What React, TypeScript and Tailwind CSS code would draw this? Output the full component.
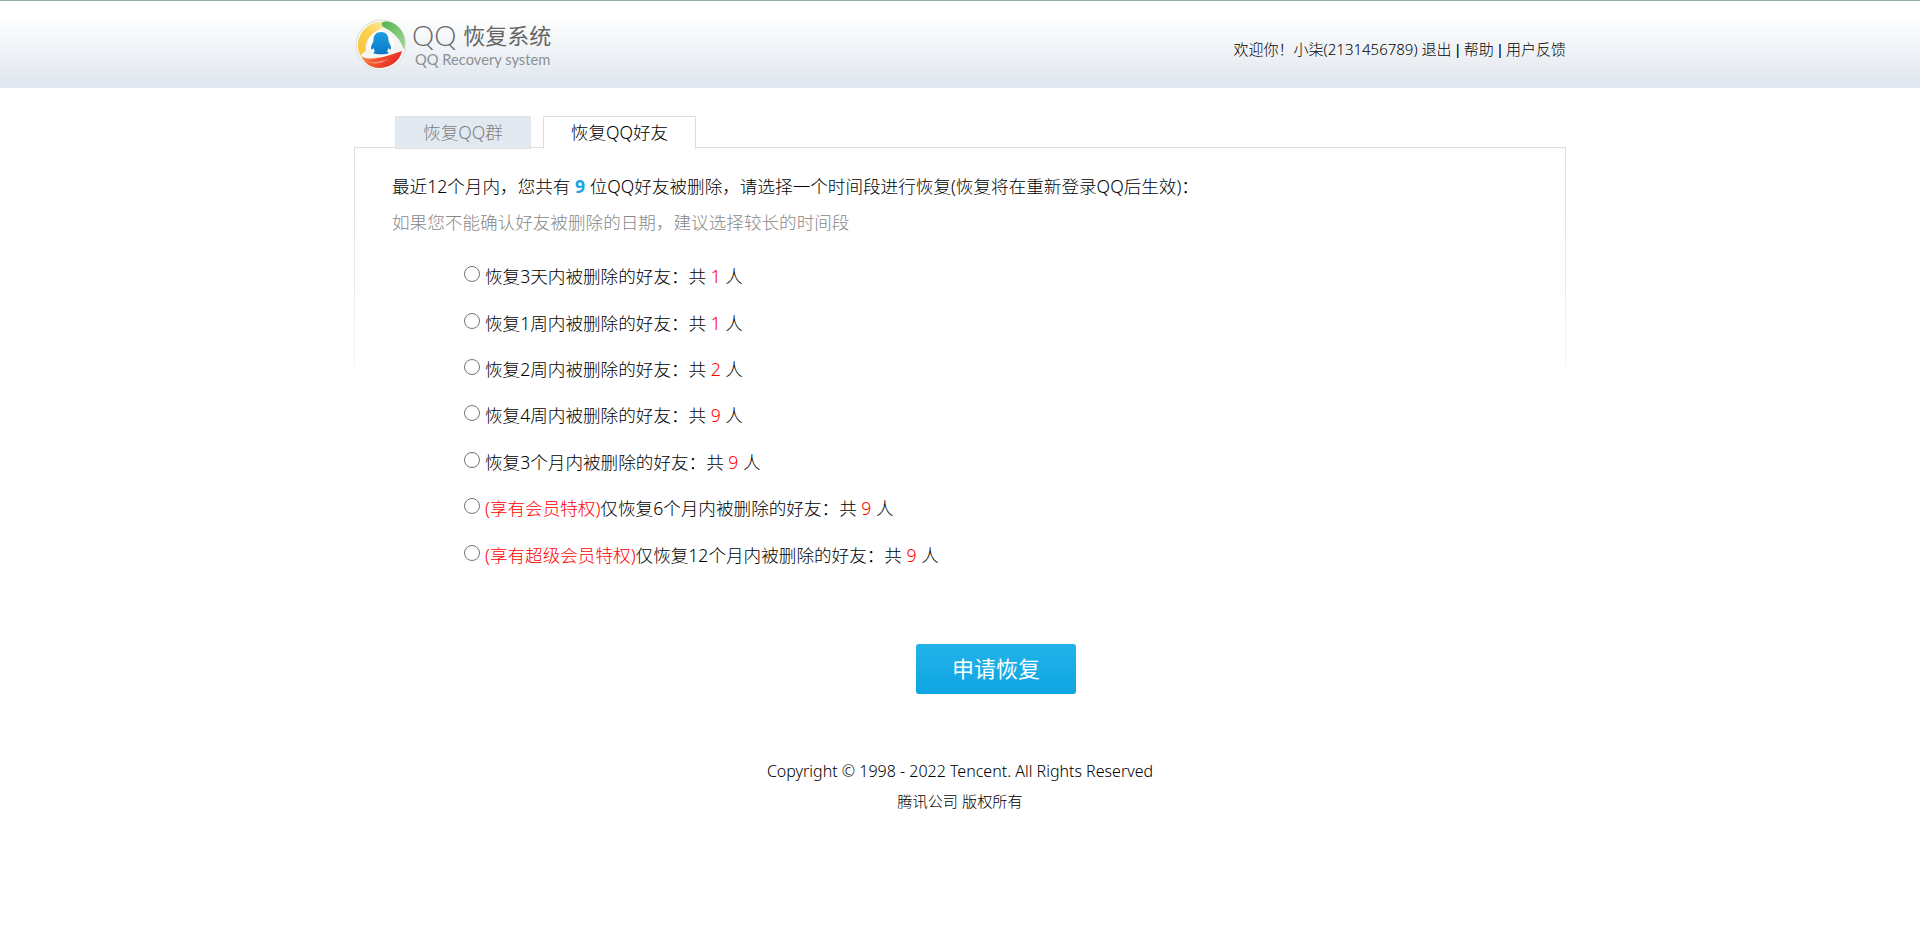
import React from "react";

const font = { fontFamily: '"Noto Sans", "Noto Sans CJK SC", sans-serif' };

function Logo() {
  return (
    <svg width="52" height="52" viewBox="0 0 52 52" className="shrink-0">
      <defs>
        <linearGradient id="blue" x1="0" y1="0" x2="0" y2="1">
          <stop offset="0" stopColor="#1d9fdf" />
          <stop offset="1" stopColor="#0b78c8" />
        </linearGradient>
        <linearGradient id="red" x1="0" y1="0" x2="1" y2="0.3">
          <stop offset="0" stopColor="#f6b06a" />
          <stop offset="0.45" stopColor="#f2572e" />
          <stop offset="1" stopColor="#e92a2a" />
        </linearGradient>
        <linearGradient id="yellow" x1="0.8" y1="0" x2="0.2" y2="1">
          <stop offset="0" stopColor="#fbe79a" />
          <stop offset="0.4" stopColor="#fcd04e" />
          <stop offset="1" stopColor="#f8c53e" />
        </linearGradient>
        <linearGradient id="green" x1="0" y1="0" x2="1" y2="1">
          <stop offset="0" stopColor="#52b44e" />
          <stop offset="1" stopColor="#a2d79a" />
        </linearGradient>
      </defs>
      <circle cx="26" cy="26" r="25" fill="#f4f6f4" stroke="#dbe3dc" strokeWidth="1" />
      <path d="M30 3C16 1 3 12 3 27c0 4 1 7 3 10 1-3 3-4 5-5-2-10 5-19 19-24.500-1-1.500-1-3 0-4.500z" fill="url(#yellow)" />
      <path d="M27 4c3-3 13-1.500 19 7 4 6 5 13 3 20-3-9-8-16-17-21-3-1.500-6-3-5-6z" fill="url(#green)" />
      <path d="M6 37c5 3 10 3 16 2 8-1 16-4 25-7-2 10-12 17-23 17C16 49 9 44 6 37z" fill="url(#red)" />
      <path d="M13 43c7 1 14-1 20-3-4 4-14 6-20 3z" fill="#ffffff" opacity="0.4" />
      <path d="M13 24c0-6 6-12 13-12s12 5 13 12c0 5-5 10-13 11-8 0-13-5-13-11z" fill="#ffffff" />
      <path d="M26 13c-5 0-7.500 3.500-7.500 8 0 1.500-.8 3-1.700 4.500-1 2-1 4.500-.3 5 .6.300 1.500-.5 2-1.500.4 1.500 1 2.500 1.700 3.300-1 .4-1.700 1-1.700 1.700 0 1 3.500 1.200 7.500 1.200s7.500-.2 7.500-1.200c0-.7-.7-1.300-1.700-1.700.7-.8 1.300-1.800 1.700-3.300.5 1 1.400 1.800 2 1.500.7-.5.7-3-.3-5-.9-1.500-1.700-3-1.700-4.500 0-4.500-2.500-8-7.500-8z" fill="url(#blue)" />
    </svg>
  );
}

const rows: { pre?: string; label: string; n: number }[] = [
  { label: "恢复3天内被删除的好友：共 ", n: 1 },
  { label: "恢复1周内被删除的好友：共 ", n: 1 },
  { label: "恢复2周内被删除的好友：共 ", n: 2 },
  { label: "恢复4周内被删除的好友：共 ", n: 9 },
  { label: "恢复3个月内被删除的好友：共 ", n: 9 },
  { pre: "(享有会员特权)", label: "仅恢复6个月内被删除的好友：共 ", n: 9 },
  { pre: "(享有超级会员特权)", label: "仅恢复12个月内被删除的好友：共 ", n: 9 },
];

function Pipe() {
  return <span className="[font-family:'Liberation_Sans',sans-serif]"> | </span>;
}

export default function App() {
  return (
    <div className="min-h-[932px] bg-white font-light text-black" style={font}>
      <header className="h-[88px] border-t border-[#93a8a8] bg-gradient-to-b from-white from-15% to-[#e3e9f0] to-90%">
        <div className="mx-auto flex h-full w-[1212px] items-start justify-between">
          <div className="ml-px mt-[18px] flex items-start gap-[5px]">
            <Logo />
            <div className="flex flex-col text-[#666]">
              <div className="flex h-[32px] items-center gap-[7px]">
                <span className="text-[28px] font-light leading-none [font-family:Lato,sans-serif]">QQ</span>
                <span className="text-[22px] font-normal leading-none">恢复系统</span>
              </div>
              <span className="ml-[3px] text-[14.700px] font-normal leading-[17px] text-[#8c9094] [font-family:Lato,sans-serif]">QQ Recovery system</span>
            </div>
          </div>
          <div className="mt-[37px] text-[15px] leading-[22px] text-black">
            欢迎你！小柒(2131456789) 退出<Pipe />帮助<Pipe />用户反馈
          </div>
        </div>
      </header>

      <main className="mx-auto w-[1212px]">
        <div className="relative z-10 mt-[28px] ml-[41px] flex h-[33px] gap-[12px] text-[17.600px] leading-[30px]">
          <div className="w-[136px] rounded-t-[2px] border border-[#dde2e7] bg-[#e3e9f0] text-center text-[#808080]">恢复QQ群</div>
          <div className="w-[153px] rounded-t-[2px] border border-b-0 border-[#dddddd] bg-white text-center">恢复QQ好友</div>
        </div>

        <section className="relative -mt-[2px] pl-[38px] pt-[21px]">
          <div className="pointer-events-none absolute inset-x-0 top-0 h-[218px] border-x border-t border-[#dddddd] [border-image:linear-gradient(#dddddd,#f4f4f4)_1]" />
          <p className="h-[36px] text-[17.600px] leading-[36px]">
            最近12个月内，您共有 <b className="font-bold text-[#1aa5e6]">9</b> 位QQ好友被删除，请选择一个时间段进行恢复(恢复将在重新登录QQ后生效)：
          </p>
          <p className="h-[36px] text-[17.600px] leading-[36px] text-[#888]">如果您不能确认好友被删除的日期，建议选择较长的时间段</p>

          <ul className="ml-[72px] mt-[13px]">
            {rows.map((r, i) => (
              <li key={i} className="flex h-[46.400px] items-center">
                <input type="radio" name="range" className="mb-[4px] mr-[5px] h-[16px] w-[16px] appearance-none rounded-full border border-[#767676] bg-white" />
                <span className="text-[17.600px] leading-[28px]">
                  {r.pre && <span className="text-[#ff0000]">{r.pre}</span>}
                  {r.label}
                  <span className="text-[#ff0000]">{r.n}</span> 人
                </span>
              </li>
            ))}
          </ul>
        </section>

        <div className="mt-[66px] flex justify-start">
          <button className="ml-[562px] h-[50px] w-[160px] rounded-[3px] bg-gradient-to-b from-[#22b3ea] to-[#0ca5e2] text-[22px] font-normal text-white">申请恢复</button>
        </div>

        <footer className="mt-[62px] text-center text-black">
          <p className="text-[16px] leading-[30px]">Copyright © 1998 - 2022 Tencent. All Rights Reserved</p>
          <p className="text-[15.200px] leading-[30px]">腾讯公司 版权所有</p>
        </footer>
      </main>
    </div>
  );
}
